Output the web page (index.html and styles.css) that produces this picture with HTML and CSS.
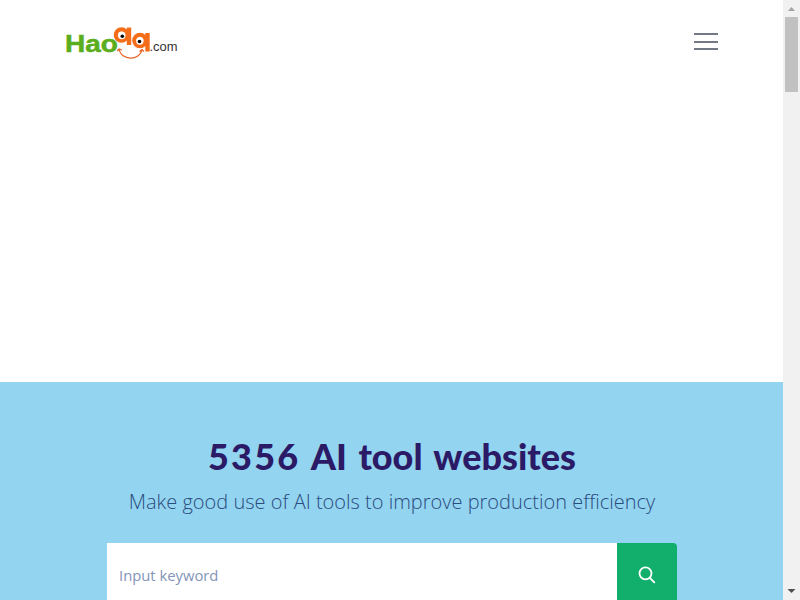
FILE: index.html
```html
<!DOCTYPE html>
<html lang="en">
<head>
<meta charset="utf-8">
<title>Haoqq.com</title>
<link rel="stylesheet" href="styles.css">
</head>
<body>
<div class="page">
  <header class="header">
    <svg class="logo" width="114" height="36" viewBox="0 0 114 36" role="img" aria-label="Haoqq.com">
      <text class="logo-hao" x="0" y="27" textLength="53" lengthAdjust="spacingAndGlyphs">Hao</text>
      <g class="logo-q">
        <circle cx="56.5" cy="10" r="5.6"/><path d="M64 2.500v17.500"/>
        <circle cx="75" cy="15.500" r="5.6"/><path d="M82.5 8v18.500"/>
      </g>
      <circle class="logo-white" cx="56.8" cy="10.500" r="3.7"/><circle class="logo-white" cx="74.8" cy="16" r="3.7"/>
      <circle cx="57.3" cy="11.300" r="1.8"/><circle cx="74.5" cy="16.500" r="1.8"/>
      <path class="logo-smile" d="M54 24C56 36 75 36 77 24.500M52 26l2-2 3 1M74.500 26.500l2.500-2 2 2"/>
      <text class="logo-com" x="84.500" y="26" textLength="28" lengthAdjust="spacingAndGlyphs">.com</text>
    </svg>
    <button class="menu" aria-label="Menu"><span></span><span></span><span></span></button>
  </header>
  <main class="hero">
    <h1><span class="count">5356</span> AI tool websites</h1>
    <p>Make good use of AI tools to improve production efficiency</p>
    <form class="search">
      <input type="text" placeholder="Input keyword">
      <button type="button" aria-label="Search">
        <svg width="18" height="18" viewBox="0 0 18 18"><circle cx="7.500" cy="7.300" r="6"/><path d="M12 12l4.800 4.800"/></svg>
      </button>
    </form>
  </main>
</div>
<div class="scrollbar">
  <svg width="17" height="17" viewBox="0 0 17 17"><path class="up" d="M5 11h7L8.500 7z"/></svg>
  <div class="thumb"></div>
  <svg width="17" height="17" viewBox="0 0 17 17"><path class="down" d="M4.500 6h8L8.500 10z"/></svg>
</div>
</body>
</html>
```
FILE: styles.css
```css
* { box-sizing: border-box; }
body { margin: 0; height: 600px; display: flex; overflow: hidden; background: #fff; font-family: "Open Sans", sans-serif; }
.page { width: 783px; height: 600px; overflow: hidden; }
.header { height: 382px; display: flex; justify-content: space-between; align-items: flex-start; padding: 25px 65px 0; }
.logo { display: block; }
.logo-hao { font: bold 24px "Liberation Sans", sans-serif; fill: #5bad20; stroke: #5bad20; stroke-width: .5px; }
.logo-com { font: 13px "Liberation Sans", sans-serif; fill: #333; }
.logo-q { fill: none; stroke: #f46d1b; stroke-width: 4.4px; }
.logo-white { fill: #fff; }
.logo-smile { fill: none; stroke: #e8652a; stroke-width: 1.2px; }
.menu { width: 24px; height: 17px; margin-top: 8px; padding: 0; border: 0; background: none; display: flex; flex-direction: column; justify-content: space-between; }
.menu span { width: 24px; height: 2px; background: #727986; }
.hero { height: 300px; background: #93d4f0; padding: 50px 106px 0 107px; text-align: center; }
h1 { margin: 0; font: 900 36px/48px Lato, sans-serif; word-spacing: 3px; color: #2b1a66; white-space: nowrap; }
.count { letter-spacing: 2.200px; }
p { margin: 8px 0 0; font: 300 20px/28px "Open Sans", sans-serif; color: #2b4c7e; white-space: nowrap; }
.search { display: flex; height: 64px; margin-top: 27px; }
.search input { flex: 1; min-width: 0; border: 0; padding: 0 12px; font: 14.800px "Open Sans", sans-serif; background: #fff; }
.search input::placeholder { color: #8494b9; opacity: 1; }
.search button { width: 60px; border: 0; padding: 0; background: #11ae6c; border-radius: 0 4px 4px 0; }
.search svg { display: block; margin: 0 auto; fill: none; stroke: #fff; stroke-width: 1.800px; }
.scrollbar { width: 17px; height: 600px; background: #f1f1f1; display: flex; flex-direction: column; }
.thumb { width: 13px; height: 75px; margin: 0 2px auto; background: #c1c1c1; }
.scrollbar svg { display: block; }
.up { fill: #a3a3a3; }
.down { fill: #505050; }
```
